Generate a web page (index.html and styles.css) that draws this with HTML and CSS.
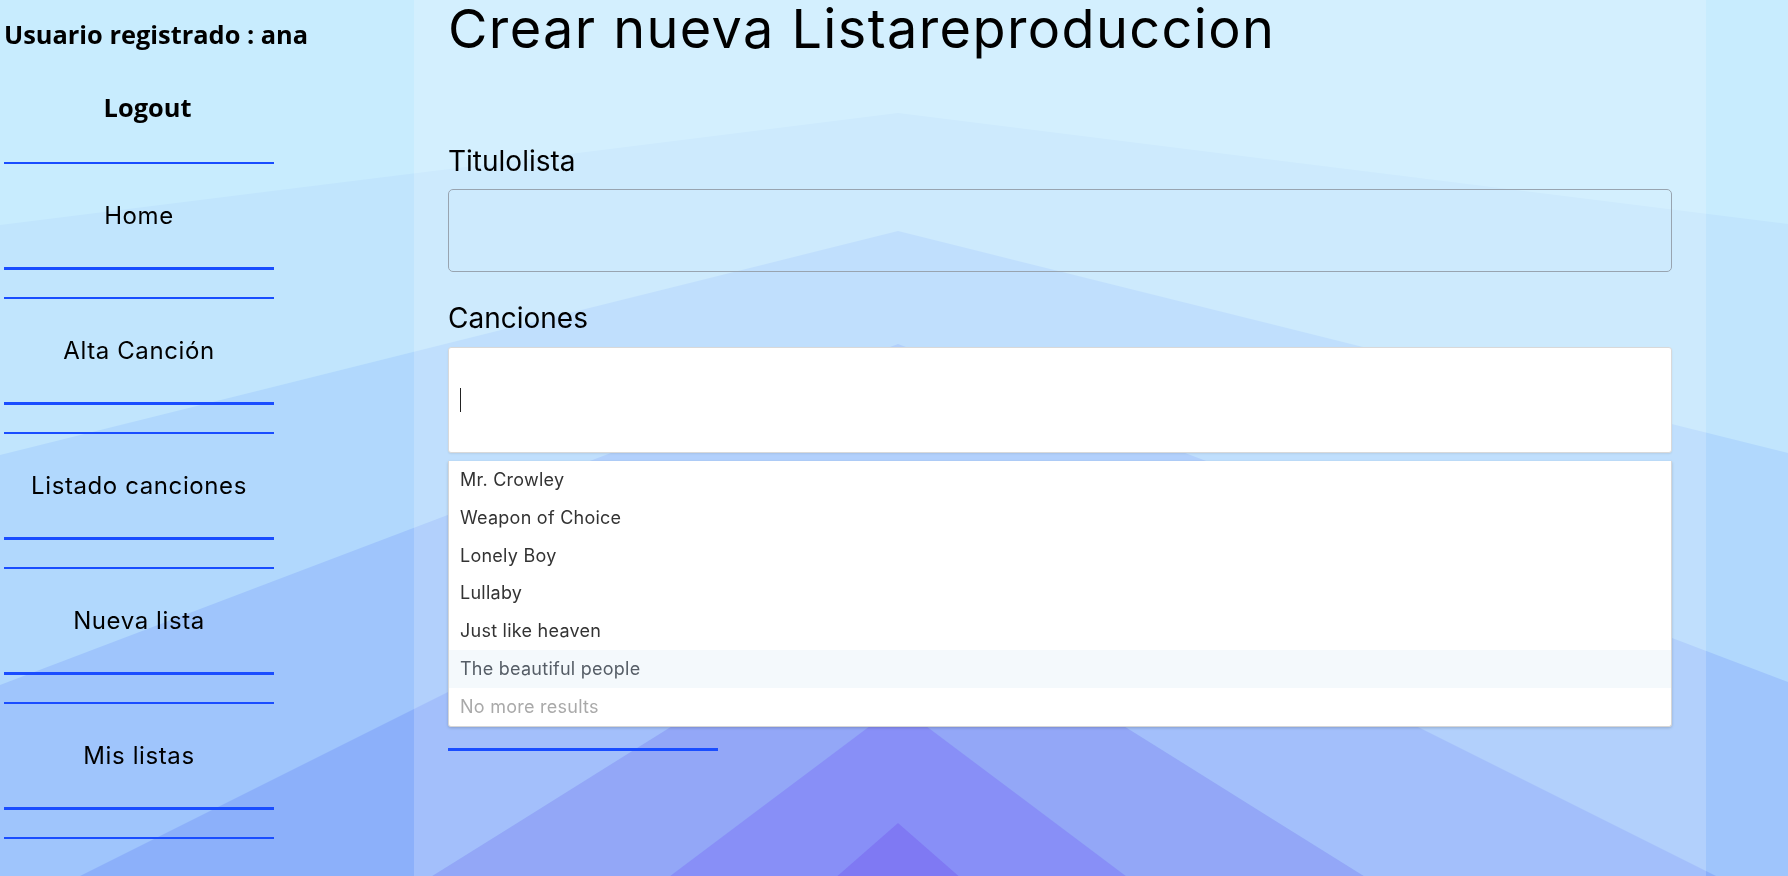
FILE: index.html
```html
<!DOCTYPE html>
<html lang="es">
<head>
<meta charset="utf-8">
<title>Crear nueva Listareproduccion</title>
<link rel="stylesheet" href="styles.css">
</head>
<body>
<svg class="bg" viewBox="0 0 1788 876" preserveAspectRatio="none" aria-hidden="true">
  <rect width="1788" height="876" fill="#c8ecfe"/>
  <polygon points="0,225 898,113 1788,224 1788,2000 0,2000" fill="#c1e5fd"/>
  <polygon points="0,455 898,231 1788,453 1788,2000 0,2000" fill="#b1d8fd"/>
  <polygon points="0,685 898,344 1788,682 1788,2000 0,2000" fill="#9fc5fc"/>
  <polygon points="0,916 898,467 1788,912 1788,2000 0,2000" fill="#8cb0fa"/>
  <polygon points="0,1146 898,585 1788,1141 1788,2000 0,2000" fill="#7892f6"/>
  <polygon points="0,1379 898,705 1788,1373 1788,2000 0,2000" fill="#6b74f6"/>
  <polygon points="0,1609 898,823 1788,1602 1788,2000 0,2000" fill="#6058f1"/>
</svg>
<div class="page">
  <aside class="sidebar">
    <h3 class="user">Usuario registrado : ana</h3>
    <a class="logout" href="#">Logout</a>
    <nav class="nav">
      <a class="nav-link" href="#">Home</a>
      <a class="nav-link" href="#">Alta Canción</a>
      <a class="nav-link" href="#">Listado canciones</a>
      <a class="nav-link" href="#">Nueva lista</a>
      <a class="nav-link" href="#">Mis listas</a>
      <span class="nav-link"></span>
    </nav>
  </aside>
  <main class="main">
    <h1 class="title">Crear nueva Listareproduccion</h1>
    <form class="form">
      <label class="label" for="titulo">Titulolista</label>
      <input class="input" id="titulo" type="text">
      <label class="label label-second">Canciones</label>
      <div class="select">
        <div class="select-box"><span class="caret"></span></div>
        <ul class="dropdown">
          <li class="option">Mr. Crowley</li>
          <li class="option">Weapon of Choice</li>
          <li class="option">Lonely Boy</li>
          <li class="option">Lullaby</li>
          <li class="option">Just like heaven</li>
          <li class="option option-hl">The beautiful people</li>
          <li class="option option-msg">No more results</li>
        </ul>
      </div>
      <div class="submit-line"></div>
    </form>
  </main>
  <div class="gutter"></div>
</div>
</body>
</html>
```
FILE: styles.css
```css
* { box-sizing: border-box; }

html, body {
  margin: 0;
  height: 100%;
  overflow: hidden;
}

body {
  font-family: Inter, "Noto Sans", sans-serif;
  color: #000;
}

.bg {
  position: fixed;
  top: 0;
  left: 0;
  width: 100%;
  height: 100%;
  z-index: -1;
  display: block;
}

.page {
  display: flex;
  height: 876px;
}

.sidebar {
  width: 414px;
  flex: none;
  padding-left: 4px;
}

.user {
  margin: 18.6px 0 0;
  font: 700 25.4px/30px "Open Sans", sans-serif;
  white-space: nowrap;
}

.logout {
  display: block;
  width: 270px;
  margin-top: 43.4px;
  padding-left: 17px;
  text-align: center;
  font: 700 25.4px/30px "Open Sans", sans-serif;
  color: #000;
  text-decoration: none;
}

.nav {
  margin-top: 39.7px;
  display: flex;
  flex-direction: column;
  gap: 27px;
}

.nav-link {
  flex: none;
  display: flex;
  align-items: center;
  justify-content: center;
  width: 270px;
  height: 108px;
  border-top: 2px solid #1a4dff;
  border-bottom: 3px solid #1a4dff;
  font-size: 24px;
  letter-spacing: 0.6px;
  color: #000;
  text-decoration: none;
}

.main {
  width: 1292px;
  flex: none;
  padding: 0 34px;
  background: rgba(255, 255, 255, 0.2);
}

.gutter {
  flex: 1;
}

.title {
  margin: 0;
  padding-top: 1px;
  font-size: 54px;
  line-height: 56px;
  letter-spacing: 1.4px;
  font-weight: 400;
  white-space: nowrap;
}

.form {
  margin: 0;
}

.label {
  display: block;
  margin-top: 86.5px;
  font-size: 28px;
  line-height: 34px;
}

.label-second {
  margin-top: 28.8px;
}

.input {
  display: block;
  width: 100%;
  height: 83px;
  margin: 11.5px 0 0;
  border: 1px solid #98a4b0;
  border-radius: 5px;
  background: transparent;
  font: inherit;
}

.select {
  position: relative;
  margin-top: 12.5px;
}

.select-box {
  height: 106px;
  display: flex;
  align-items: center;
  padding-left: 11px;
  background: #fff;
  border: 1px solid #d9d9d9;
  border-radius: 3px;
  box-shadow: 0 1px 2px rgba(0, 0, 0, 0.08);
}

.caret {
  width: 1px;
  height: 24px;
  background: #222;
}

.dropdown {
  position: absolute;
  top: calc(100% + 7.7px);
  left: 0;
  right: 0;
  margin: 0;
  padding: 0;
  list-style: none;
  background: #fff;
  border: 1px solid #d6d6d6;
  border-top: none;
  border-radius: 0 0 3px 3px;
  box-shadow: 0 1px 3px rgba(0, 0, 0, 0.18);
  z-index: 2;
}

.option {
  height: 37.8px;
  line-height: 37.8px;
  padding-left: 11px;
  font-size: 18px;
  letter-spacing: 0.25px;
  color: #333;
}

.option-hl {
  background: #f4f9fc;
  color: #555d66;
}

.option-msg {
  color: #a9a9a9;
}

.submit-line {
  width: 270px;
  height: 3px;
  margin-top: 294.7px;
  background: #1a4dff;
}
```
